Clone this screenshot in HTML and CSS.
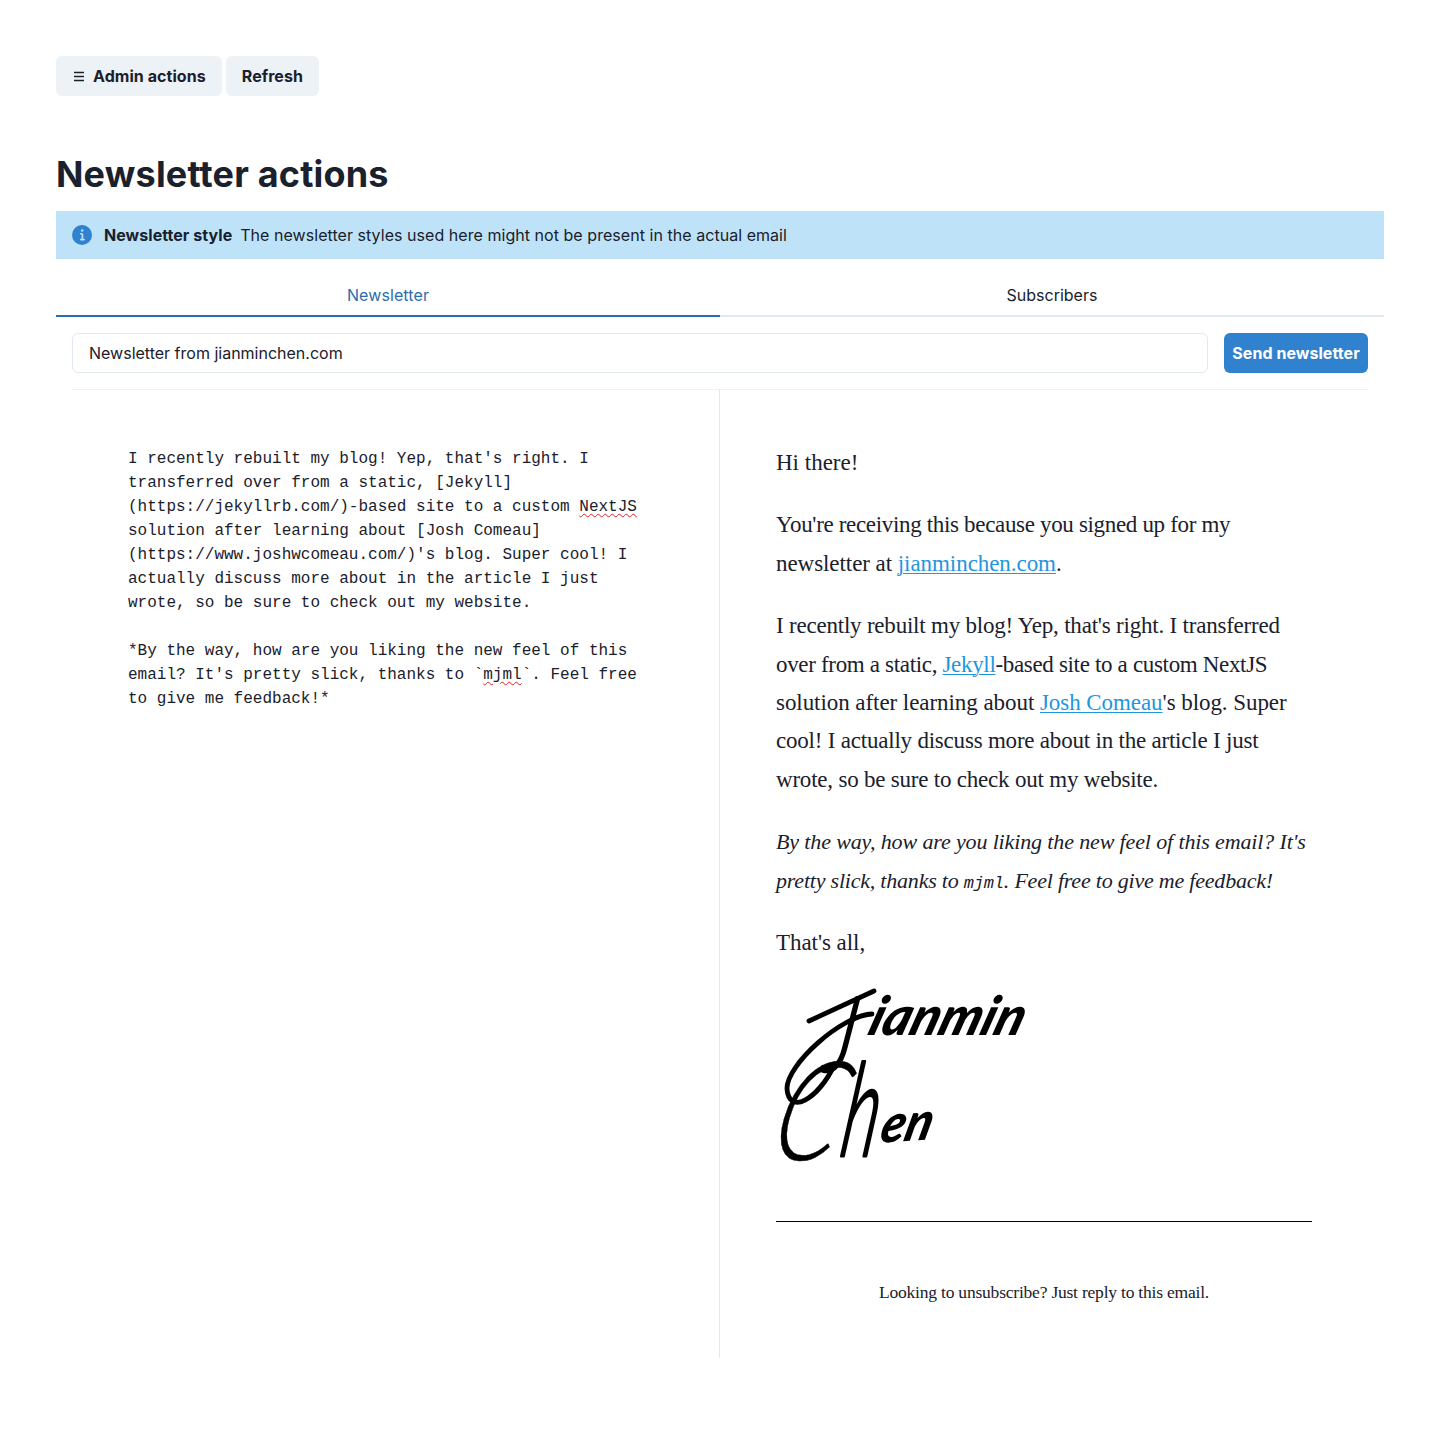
FILE: index.html
```html
<!DOCTYPE html>
<html lang="en">
<head>
<meta charset="utf-8">
<title>Newsletter actions</title>
<link rel="stylesheet" href="styles.css">
</head>
<body>
<main class="page">
  <div class="toolbar">
    <button class="button"><svg class="menu-icon" viewBox="0 0 12 12" width="12" height="12"><path d="M1 2.5h10M1 6.5h10M1 10.5h10" stroke="currentColor" stroke-width="1.7"/></svg>Admin actions</button>
    <button class="button">Refresh</button>
  </div>
  <h1 class="title">Newsletter actions</h1>
  <div class="alert">
    <svg class="alert-icon" viewBox="0 0 24 24" width="24" height="24"><path fill="#3182ce" d="M12 0a12 12 0 1 0 12 12A12 12 0 0 0 12 0zm.25 5a1.5 1.5 0 1 1-1.5 1.5 1.5 1.5 0 0 1 1.5-1.5zm2.25 13.5h-4a1 1 0 0 1 0-2h.75a.25.25 0 0 0 .25-.25v-4.5a.25.25 0 0 0-.25-.25h-.75a1 1 0 0 1 0-2h1a2 2 0 0 1 2 2v4.75a.25.25 0 0 0 .25.25h.75a1 1 0 1 1 0 2z"/></svg>
    <strong>Newsletter style</strong>
    <span>The newsletter styles used here might not be present in the actual email</span>
  </div>
  <div class="tabs">
    <button class="tab tab-active">Newsletter</button>
    <button class="tab">Subscribers</button>
  </div>
  <section class="panel">
    <div class="compose">
      <input class="subject" value="Newsletter from jianminchen.com">
      <button class="button send">Send newsletter</button>
    </div>
    <div class="columns">
      <div class="editor">I recently rebuilt my blog! Yep, that's right. I
transferred over from a static, [Jekyll]
(https://jekyllrb.com/)-based site to a custom <span class="misspelled">NextJS</span>
solution after learning about [Josh Comeau]
(https://www.joshwcomeau.com/)'s blog. Super cool! I
actually discuss more about in the article I just
wrote, so be sure to check out my website.

*By the way, how are you liking the new feel of this
email? It's pretty slick, thanks to `<span class="misspelled">mjml</span>`. Feel free
to give me feedback!*</div>
      <article class="preview">
        <p>Hi there!</p>
        <p><span class="tighter">You're receiving this because you signed up for my</span><br><span class="snug">newsletter at <a>jianminchen.com</a>.</span></p>
        <p><span class="tight">I recently rebuilt my blog! Yep, that's right. I transferred</span><br><span class="tighter">over from a static, <a>Jekyll</a>-based site to a custom NextJS</span><br><span class="snug">solution after learning about <a>Josh Comeau</a>'s blog. Super</span><br><span class="tight">cool! I actually discuss more about in the article I just</span><br><span class="tight">wrote, so be sure to check out my website.</span></p>
        <p class="aside">By the way, how are you liking the new feel of this email? It's<br><span class="tight">pretty slick, thanks to <code>mjml</code>. Feel free to give me feedback!</span></p>
        <p><span class="snug">That's all,</span></p>
        <svg class="signature" viewBox="0 0 256 180" width="256" height="180">
          <g class="flourish">
            <path d="M33 36L98 6"/>
            <path d="M96 29C66 30 10 80 11 104C13 130 41 116 59 79"/>
          </g>
          <text class="sig-capital sig-thin" transform="translate(46 86) skewX(-10) scale(.68 1)" font-size="104">J</text>
          <text class="sig-name" transform="translate(90 50) skewX(-18)" textLength="154" lengthAdjust="spacingAndGlyphs">ianmin</text>
          <text class="sig-capital" transform="translate(-10 175) skewX(-16) scale(.76 1)" font-size="138">C</text>
          <text class="sig-capital sig-thin" transform="translate(62 171) skewX(-9) scale(.54 1)" font-size="130">h</text>
          <text class="sig-name" transform="translate(102 158) skewX(-18) rotate(-4)" textLength="50" lengthAdjust="spacingAndGlyphs">en</text>
        </svg>
        <hr>
        <p class="unsubscribe">Looking to unsubscribe? Just reply to this email.</p>
      </article>
    </div>
  </section>
</main>
</body>
</html>
```
FILE: styles.css
```css
* { box-sizing: border-box; }
body { margin: 0; background: #fff; color: #1a202c; font: 16px/24px Inter, sans-serif; }
button, input { font: inherit; color: inherit; }
.page { padding: 56px; }
.toolbar { display: flex; gap: 4px; margin-bottom: 57px; }
.button { display: flex; align-items: center; justify-content: center; gap: 8px; height: 40px; padding: 0 16px; border: 0; border-radius: 6px; background: #edf2f7; font-weight: 700; letter-spacing: .06px; white-space: nowrap; }
.menu-icon { margin-left: 1px; }
.title { margin: 0 0 15px; font-size: 36px; line-height: 43px; font-weight: 700; letter-spacing: .18px; }
.alert { display: flex; align-items: center; height: 48px; padding: 0 16px; background: #bee3f8; letter-spacing: .045px; }
.alert-icon { width: 20px; height: 20px; margin-right: 12px; }
.alert strong { margin-right: 8px; font-weight: 700; }
.tabs { display: flex; margin-top: 16px; }
.tab { flex: 1; height: 42px; padding: 0; border: 0; border-bottom: 2px solid #e2e8f0; background: none; }
.tab-active { color: #2b6cb0; border-color: #2b6cb0; letter-spacing: .1px; }
.panel { padding: 16px; }
.compose { display: flex; gap: 16px; padding-bottom: 16px; border-bottom: 1px solid #edf0f4; }
.subject { flex: 1; height: 40px; padding: 0 16px; border: 1px solid #e2e8f0; border-radius: 6px; background: #fff; }
.send { width: 144px; padding: 0; background: #3182ce; color: #fff; }
.columns { display: grid; grid-template-columns: minmax(0, 1fr) minmax(0, 1fr); height: 968px; }
.editor { padding: 57px 56px; border-right: 1px solid #e2e8f0; white-space: pre; font: 16px/24px "Liberation Mono", monospace; }
.misspelled { text-decoration: underline wavy #d22 1px; text-underline-offset: 2px; }
.preview { padding: 54px 56px 0; font: 23px/38.4px "Liberation Serif", serif; white-space: nowrap; }
.preview p { margin: 0 0 24px; }
.preview a { color: #1e96e0; text-decoration: underline 1px; text-underline-offset: 2px; }
.snug { letter-spacing: -.06px; }
.tight { letter-spacing: -.21px; }
.tighter { letter-spacing: -.33px; }
.preview .aside { font-size: 22px; font-style: italic; letter-spacing: -.13px; }
.aside code { font: italic 17px "Liberation Mono", monospace; }
.signature { display: block; margin-top: -25px; position: relative; overflow: visible; }
.preview p:has(+ .signature) { margin-bottom: 48px; }
.flourish { fill: none; stroke: #000; stroke-width: 4.8; stroke-linecap: round; }
.sig-capital { font-family: Lato, sans-serif; font-style: italic; font-weight: 300; stroke: #000; stroke-width: .4; stroke-linejoin: round; }
.sig-thin { stroke-width: 3; }
.sig-name { font: italic 900 54px Lato, sans-serif; }
.preview hr { margin: 56px 0; border: 0; border-top: 1px solid #000; }
.preview .unsubscribe { margin: 0; font-size: 17.5px; line-height: 28.8px; letter-spacing: -.21px; text-align: center; }
```
